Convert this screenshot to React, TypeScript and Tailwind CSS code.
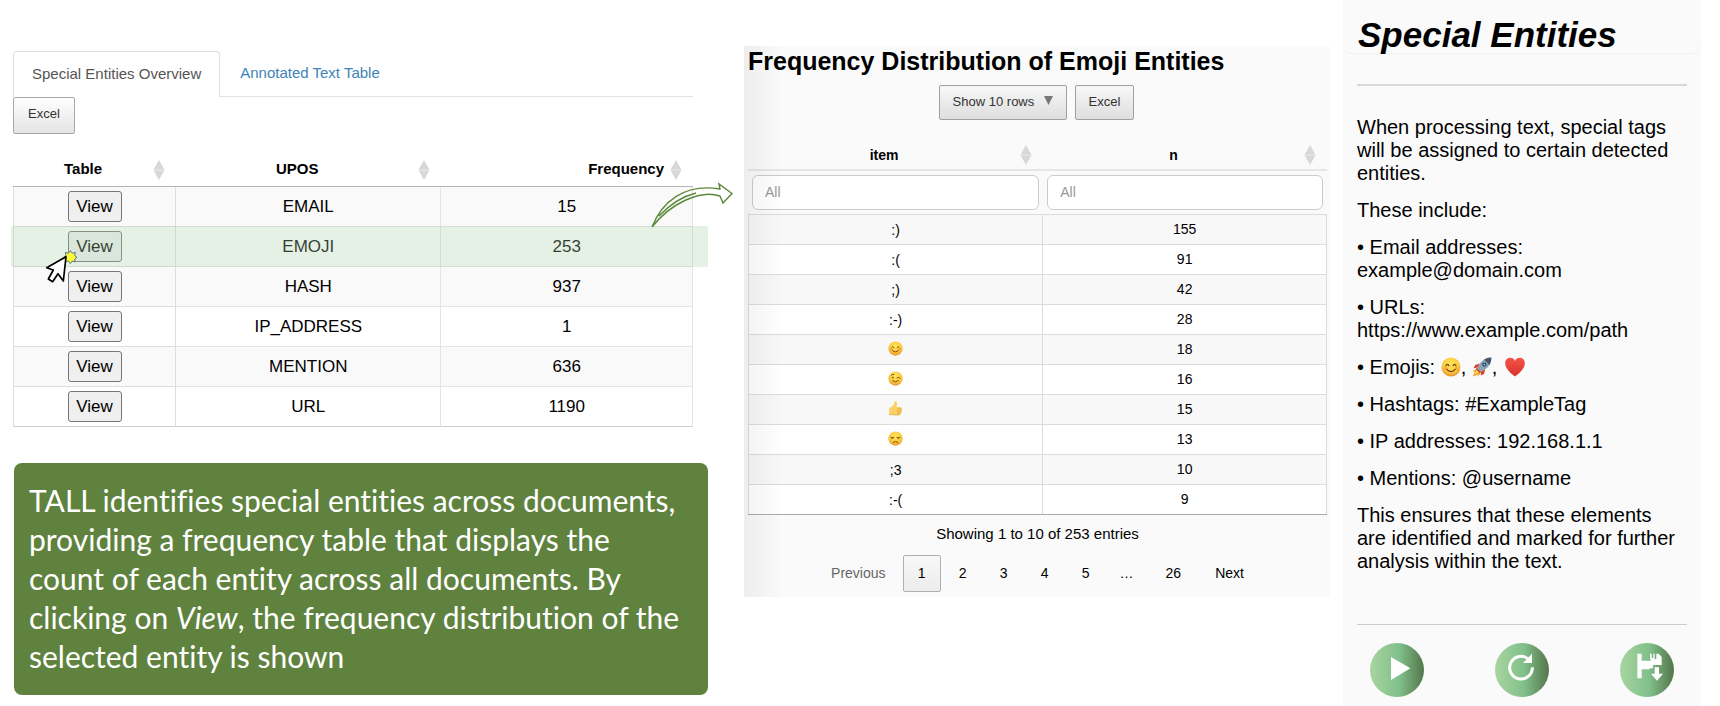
import type { ReactNode } from "react";

const entities = [
  { name: "EMAIL", count: 15 },
  { name: "EMOJI", count: 253 },
  { name: "HASH", count: 937 },
  { name: "IP_ADDRESS", count: 1 },
  { name: "MENTION", count: 636 },
  { name: "URL", count: 1190 },
];

function SortIcon() {
  return (
    <svg viewBox="0 0 12 20" className="h-5 w-3 shrink-0" aria-hidden="true">
      <path d="M6 0 L11.5 9.8 H0.5 Z M0.5 10.2 H11.5 L6 20 Z" fill="#d8d8d8" />
    </svg>
  );
}

type Mood = "smile" | "wink" | "unamused";

function Face({ mood, className }: { mood: Mood; className: string }) {
  return (
    <svg viewBox="0 0 20 20" className={className} role="img" aria-label={mood}>
      <defs>
        <radialGradient id={"face-" + mood} cx="0.5" cy="0.35" r="0.65">
          <stop offset="0" stopColor="#ffe65c" />
          <stop offset="0.65" stopColor="#fbc93d" />
          <stop offset="1" stopColor="#e8922a" />
        </radialGradient>
      </defs>
      <circle cx="10" cy="10" r="9.5" fill={"url(#face-" + mood + ")"} />
      <g fill="none" stroke="#6b3d0c" strokeWidth="1.2" strokeLinecap="round">
        {mood === "smile" && (
          <>
            <circle cx="4.6" cy="11.2" r="1.7" fill="#f58a4b" stroke="none" opacity="0.6" />
            <circle cx="15.4" cy="11.2" r="1.7" fill="#f58a4b" stroke="none" opacity="0.6" />
            <path d="M5 8.6 Q6.5 6 8 8.6 M12 8.6 Q13.5 6 15 8.6" />
            <path d="M5.8 12.4 Q10 17 14.2 12.4" />
          </>
        )}
        {mood === "wink" && (
          <>
            <path d="M4.6 5.4 Q6 4 7.6 4.6 M12 9 Q14 7.4 16 9.4" />
            <circle cx="6.6" cy="8.8" r="1.1" fill="#6b3d0c" stroke="none" />
            <path d="M6.2 13 Q10 16.4 13.8 12.8" />
          </>
        )}
        {mood === "unamused" && (
          <>
            <path d="M4 8.4 Q6 9.8 8 8.8 M12 8.8 Q14 9.8 16 8.4" />
            <circle cx="5.6" cy="9.8" r="0.9" fill="#6b3d0c" stroke="none" />
            <circle cx="13.6" cy="9.8" r="0.9" fill="#6b3d0c" stroke="none" />
            <path d="M7 15 Q10 12.6 13 15" />
          </>
        )}
      </g>
    </svg>
  );
}

function ThumbsUp() {
  return (
    <svg viewBox="0 0 20 20" className="inline-block size-[15px]" role="img" aria-label="thumbs up">
      <path
        d="M1.5 9.4 Q5.4 8.6 8 4.6 Q8 0.6 9.8 0.4 Q12.6 0.8 12 4.6 L11.4 8 H17 Q19.2 8.4 18.6 10.6 Q19.6 12 18.2 13.4 Q18.8 15 17.2 16 Q17.4 18 15.4 18.8 H8 Q5 18.4 1.5 18.4 Z"
        fill="#fbd065"
      />
      <path d="M12 10.8 H18 M12 13.6 H17.8 M12.2 16.2 H17" stroke="#d9902a" strokeWidth="0.9" />
      <path d="M1.5 18 Q5 18 8 18.6 H15.4" stroke="#e0a034" strokeWidth="0.9" fill="none" />
    </svg>
  );
}

function Rocket() {
  return (
    <svg viewBox="0 0 20 20" className="inline-block size-5 align-[-3px]" role="img" aria-label="rocket">
      <path d="M4.6 11.6 L0.8 14.6 L3 14.8 L0.6 19.4 L6 17.4 L5.6 19.6 L9 15.6 Z" fill="#f59a23" />
      <path d="M4.8 13 L2.2 17.8 L7 15.4 Z" fill="#ffe14d" />
      <path d="M7.6 6.6 L3.2 8 L1.6 11.2 L6 10.6 Z M13.2 12.2 L12 17 L8.8 18.6 L9.2 14 Z" fill="#d8402f" />
      <path d="M19.4 0.6 Q12.4 0.6 8 6.2 L5 11.4 L8.6 15 L13.8 12 Q19.4 7.6 19.4 0.6 Z" fill="#8fa3b3" />
      <path d="M19.4 0.6 Q15.4 0.6 12 2.4 L17.6 8 Q19.4 4.6 19.4 0.6 Z" fill="#46586a" />
      <circle cx="12.4" cy="7.6" r="2.1" fill="#23405e" />
      <circle cx="12.4" cy="7.6" r="1.1" fill="#6fb7e8" />
      <path d="M4.8 11 L9 15.2 L8 16 L4 12 Z" fill="#b3342a" />
    </svg>
  );
}

function Heart() {
  return (
    <svg viewBox="0 0 20 20" className="ml-0.5 inline-block size-5 align-[-3px]" role="img" aria-label="heart">
      <defs>
        <linearGradient id="heart" x1="0" y1="0" x2="0" y2="1">
          <stop offset="0" stopColor="#f4534a" />
          <stop offset="1" stopColor="#d9322a" />
        </linearGradient>
      </defs>
      <path
        d="M10 19.4 C6 16.4 0.2 12 0.2 6 C0.2 3 2.4 0.8 5.2 0.8 C7.6 0.8 9.2 2 10 4 C10.8 2 12.4 0.8 14.8 0.8 C17.6 0.8 19.8 3 19.8 6 C19.8 12 14 16.4 10 19.4 Z"
        fill="url(#heart)"
      />
    </svg>
  );
}

const emojiRows: { key: string; item: ReactNode; n: number }[] = [
  { key: "a", item: ":)", n: 155 },
  { key: "b", item: ":(", n: 91 },
  { key: "c", item: ";)", n: 42 },
  { key: "d", item: ":-)", n: 28 },
  { key: "e", item: <Face mood="smile" className="inline-block size-[15px]" />, n: 18 },
  { key: "f", item: <Face mood="wink" className="inline-block size-[15px]" />, n: 16 },
  { key: "g", item: <ThumbsUp />, n: 15 },
  { key: "h", item: <Face mood="unamused" className="inline-block size-[15px]" />, n: 13 },
  { key: "i", item: ";3", n: 10 },
  { key: "j", item: ":-(", n: 9 },
];

function ClickCursor() {
  return (
    <svg viewBox="0 0 180 135" className="absolute -left-[38px] top-[14px] z-20 h-[45px] w-[60px]" aria-hidden="true">
      <path
        d="M121 17 L127 25 L136 22 L134 32 L141 37 L134 42 L136 51 L127 48 L121 56 L115 48 L106 51 L108 42 L101 37 L108 32 L106 22 L115 25 Z"
        fill="#ffff38"
        stroke="#55748a"
        strokeWidth="3"
      />
      <path
        d="M108 35 L50 68 L70 75 L55 102 L68 110 L84 86 L100 108 Z"
        fill="#fff"
        stroke="#000"
        strokeWidth="5"
        strokeLinejoin="round"
      />
    </svg>
  );
}

function Overview() {
  return (
    <section className="pl-[13px] pr-9 pt-[51px]">
      <div className="mr-[15px] flex border-b border-[#e2e2e2] text-[15px]" role="tablist">
        <button
          role="tab"
          aria-selected="true"
          className="-mb-px h-[46px] rounded-t border border-b-0 border-[#ddd] bg-white px-[18px] pb-px text-[#555]"
        >
          Special Entities Overview
        </button>
        <button role="tab" aria-selected="false" className="h-[45px] px-5 text-[#4183b8]">
          Annotated Text Table
        </button>
      </div>
      <button className="block h-[37px] rounded-xs border border-[#a8a8a8] bg-linear-to-b from-white to-[#e4e4e4] px-[14px] pb-1 text-[13px] text-[#333]">
        Excel
      </button>

      <div className="relative mt-[19px]">
        <table className="w-[calc(100%-15px)] table-fixed border-separate border-spacing-0">
          <colgroup>
            <col className="w-[24%]" />
            <col className="w-[39%]" />
            <col className="w-[37%]" />
          </colgroup>
          <thead>
            <tr className="text-[15px]">
              <th className="h-[34px] border-b border-[#b5b5b5] p-0">
                <div className="flex items-center pr-[11px]">
                  <span className="grow">Table</span>
                  <SortIcon />
                </div>
              </th>
              <th className="border-b border-[#b5b5b5] p-0">
                <div className="flex items-center pr-[11px]">
                  <span className="grow">UPOS</span>
                  <SortIcon />
                </div>
              </th>
              <th className="border-b border-[#b5b5b5] p-0">
                <div className="flex items-center justify-end gap-1.5 pr-[11px]">
                  <span>Frequency</span>
                  <SortIcon />
                </div>
              </th>
            </tr>
          </thead>
          <tbody className="text-center text-[17px]">
            {entities.map((e) => (
              <tr key={e.name} className="odd:bg-[#f9f9f9] last:[&>td]:border-b-[#cfcfcf]">
                <td className="h-[40px] border-x border-b border-[#dedede] p-0">
                  <div className="relative mx-auto w-[54px]">
                    <button className="block h-[31px] w-full rounded-[3px] border border-[#767676] bg-[#efefef]">
                      View
                    </button>
                    {e.name === "EMOJI" && <ClickCursor />}
                  </div>
                </td>
                <td className="border-r border-b border-[#e4e4e4] p-0">{e.name}</td>
                <td className="border-r border-b border-[#e4e4e4] p-0">{e.count}</td>
              </tr>
            ))}
          </tbody>
        </table>
        <div className="absolute -left-0.5 right-0 top-[73px] z-10 h-[41px] rounded-xs bg-[#a8d0a5]/30" />
        <svg
          viewBox="0 0 84 48"
          className="absolute -right-[26px] top-[29px] z-20 h-12 w-[84px]"
          aria-hidden="true"
        >
          <path
            d="M2 45 C12 20 34 1 70 7 L69 2 L82 11.5 L73 21 L70 14 C50 7 20 22 2 45 M9 34 Q26 16 46 11"
            fill="none"
            stroke="#5d8838"
            strokeWidth="1.4"
          />
        </svg>
      </div>

      <p className="ml-px mt-9 rounded-lg bg-[#5f823e] pt-[18px] pr-1 pb-[19px] pl-[15px] font-['Lato',sans-serif] text-[30px] leading-[39px] text-white [font-variant-ligatures:none]">
        TALL identifies special entities across documents, providing a frequency table that displays the
        <br />
        count of each entity across all documents. By clicking on <em>View</em>, the frequency distribution of the
        selected entity is shown
      </p>
    </section>
  );
}

function Distribution() {
  return (
    <section className="pr-[13px] pt-[46px]">
      <div className="relative bg-[#fafafa] pl-1 pr-[3px] pb-[5px]">
        <h2 className="text-[25px] leading-[30px] font-bold">Frequency Distribution of Emoji Entities</h2>
        <div className="mt-[9px] flex justify-center gap-2 pr-0.5 text-[13px] text-[#333]">
          <div className="relative">
            <select
              aria-label="Rows per page"
              className="h-[35px] w-32 appearance-none rounded-xs border border-[#a0a0a0] bg-linear-to-b from-[#f8f8f8] to-[#dedede] pl-[13px] pb-0.5"
            >
              <option>Show 10 rows</option>
              <option>Show 25 rows</option>
              <option>Show 50 rows</option>
            </select>
            <svg viewBox="0 0 9 9" className="absolute right-[14px] top-[11px] size-[9px]" aria-hidden="true">
              <path d="M0 0 H9 L4.5 9 Z" fill="#777" />
            </svg>
          </div>
          <button className="h-[35px] rounded-xs border border-[#a0a0a0] bg-linear-to-b from-[#f8f8f8] to-[#dedede] px-[13px] pb-0.5">
            Excel
          </button>
        </div>

        <table className="mt-[17px] w-full table-fixed border-separate border-spacing-0 border-b border-[#aaa] text-[14px]">
          <colgroup>
            <col className="w-[51%]" />
            <col className="w-[49%]" />
          </colgroup>
          <thead>
            <tr>
              <th className="h-[34px] border-b-2 border-[#e6e6e6] p-0 pt-1">
                <div className="flex items-center pr-[11px]">
                  <span className="grow">item</span>
                  <SortIcon />
                </div>
              </th>
              <th className="border-b-2 border-[#e6e6e6] p-0 pt-1">
                <div className="flex items-center pr-[11px]">
                  <span className="grow">n</span>
                  <SortIcon />
                </div>
              </th>
            </tr>
            <tr>
              <td className="h-[43px] p-0 px-1">
                <input
                  aria-label="Filter item"
                  placeholder="All"
                  className="block h-[35px] w-full rounded-md border border-[#ccc] bg-white px-3 pb-0.5 placeholder:text-[#999]"
                />
              </td>
              <td className="p-0 px-1">
                <input
                  aria-label="Filter n"
                  placeholder="All"
                  className="block h-[35px] w-full rounded-md border border-[#ccc] bg-white px-3 pb-0.5 placeholder:text-[#999]"
                />
              </td>
            </tr>
          </thead>
          <tbody className="text-center">
            {emojiRows.map((r) => (
              <tr key={r.key} className="bg-white odd:bg-[#f8f8f8]">
                <td className="h-[30px] border-x border-t border-[#dcdcdc] p-0 leading-5">
                  <span className="inline-flex h-5 items-center">{r.item}</span>
                </td>
                <td className="border-r border-t border-[#dcdcdc] p-0">{r.n}</td>
              </tr>
            ))}
          </tbody>
        </table>

        <p className="mt-[9px] text-center text-[15px] leading-5">Showing 1 to 10 of 253 entries</p>
        <nav className="mt-[11px] flex items-center justify-center gap-[3px] text-[14px]" aria-label="Pages">
          <button className="h-[37px] px-[14px] text-[#666]">Previous</button>
          <button className="h-[37px] w-[38px] rounded-xs border border-[#b0b0b0] bg-linear-to-b from-[#f8f8f8] to-[#ececec]">
            1
          </button>
          {["2", "3", "4", "5"].map((p) => (
            <button key={p} className="h-[37px] w-[38px]">
              {p}
            </button>
          ))}
          <span className="w-[38px] text-center">…</span>
          <button className="h-[37px] px-[17px]">26</button>
          <button className="h-[37px] px-[14px]">Next</button>
        </nav>
        <div className="pointer-events-none absolute inset-y-0 left-0 w-10 bg-linear-to-r from-black/5 to-transparent" />
      </div>
    </section>
  );
}

function RoundButton({ label, children }: { label: string; children: ReactNode }) {
  return (
    <button
      aria-label={label}
      className="size-[54px] rounded-full bg-linear-to-r from-[#a8d5a0] via-[#80bf8a] via-55% to-[#54764a]"
    >
      <svg viewBox="0 0 162 162" className="size-full">
        {children}
      </svg>
    </button>
  );
}

function Info() {
  return (
    <aside className="pr-[19px]">
      <div className="min-h-screen bg-[#fafafa]">
        <header className="h-[54px] rounded-b-lg border-b border-[#f1f1f1] pt-[14px] pl-[15px]">
          <h1 className="text-[35px] leading-[41px] font-bold italic">Special Entities</h1>
        </header>
        <div className="px-[14px] pt-[30px]">
          <hr className="border-t-2 border-[#d8d8d8]" />
          <div className="space-y-[14px] pt-[30px] pr-1 text-[20px] leading-[23px]">
            <p>When processing text, special tags will be assigned to certain detected entities.</p>
            <p>These include:</p>
            <p>
              • Email addresses:
              <br />
              example@domain.com
            </p>
            <p>
              • URLs:
              <br />
              https://www.example.com/path
            </p>
            <p>
              • Emojis: <Face mood="smile" className="inline-block size-5 align-[-3px]" />, <Rocket />, <Heart />
            </p>
            <p>• Hashtags: #ExampleTag</p>
            <p>• IP addresses: 192.168.1.1</p>
            <p>• Mentions: @username</p>
            <p>This ensures that these elements are identified and marked for further analysis within the text.</p>
          </div>
          <hr className="mt-[51px] border-[#ccc]" />
          <div className="flex justify-between px-[13px] pt-[18px]">
            <RoundButton label="Run">
              <path d="M63 42 L121 76 L63 111 Z" fill="#fff" />
            </RoundButton>
            <RoundButton label="Reset">
              <path d="M101 49 A34 34 0 1 0 112 73" fill="none" stroke="#fff" strokeWidth="9" />
              <path d="M111 32 V60 H84 Z" fill="#fff" />
            </RoundButton>
            <RoundButton label="Save">
              <path
                d="M52 32 H65 V53 H92 V48 H109 V32 H116 L125 42 V66 H99 V76 H89 V79 H65 V106 H52 Z"
                fill="#fff"
              />
              <path d="M90 32 H95 V45 H100 V32 H104 V48 H90 Z" fill="#fff" />
              <path d="M104 73 H117 V92 H129 L111 113 L93 92 H104 Z" fill="#fff" />
            </RoundButton>
          </div>
        </div>
      </div>
    </aside>
  );
}

export default function App() {
  return (
    <main className="grid min-h-screen grid-cols-[744fr_599fr_377fr] bg-white font-['Liberation_Sans',Arial,sans-serif] text-black">
      <Overview />
      <Distribution />
      <Info />
    </main>
  );
}
